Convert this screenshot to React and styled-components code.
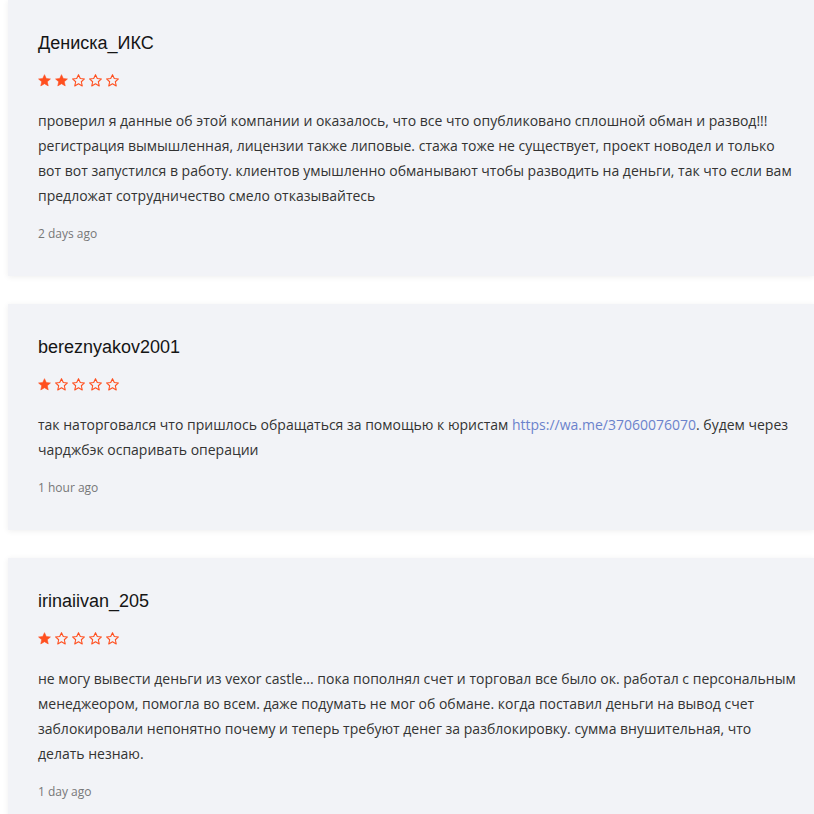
import React from "react";
import styled, { createGlobalStyle } from "styled-components";

const Global = createGlobalStyle`
  html, body { margin: 0; padding: 0; background: #fff; overflow-x: hidden; }
  body { font-family: "Open Sans", "Liberation Sans", sans-serif; }
`;

const List = styled.div`
  display: flex;
  flex-direction: column;
  gap: 28px;
  padding-left: 8px;
`;

const Card = styled.div`
  background: #f2f3f7;
  box-shadow: 0 1px 6px rgba(0, 0, 0, 0.07);
  padding: 30px 16px 33px 30px;
  display: flex;
  flex-direction: column;
`;

const Name = styled.div`
  font-family: "Liberation Sans", Arial, sans-serif;
  font-size: 18px;
  line-height: 26px;
  color: #151515;
`;

const Stars = styled.div`
  display: flex;
  gap: 4px;
  margin-top: 18px;
  height: 13px;
  align-items: center;
`;

const Body = styled.p`
  margin: 21px 0 0;
  font-size: 14px;
  line-height: 25px;
  color: #333;
`;

const Link = styled.a`
  color: #6b82cc;
  text-decoration: none;
`;

const Time = styled.div`
  margin-top: 17px;
  font-size: 12px;
  line-height: 18px;
  color: #777;
`;

const Star = ({ filled }) => (
  <svg width="13" height="13" viewBox="0 0 24 24">
    <path
      d="M12 1.2l3.3 7.1 7.7.8-5.8 5.2 1.7 7.7L12 18l-6.9 4 1.7-7.7L1 9.1l7.7-.8z"
      fill={filled ? "#ff4f1f" : "none"}
      stroke="#ff4f1f"
      strokeWidth={filled ? 1 : 2}
      strokeLinejoin="round"
    />
  </svg>
);

const Rating = ({ value }) => (
  <Stars>
    {[1, 2, 3, 4, 5].map((i) => (
      <Star key={i} filled={i <= value} />
    ))}
  </Stars>
);

const reviews = [
  {
    name: "Дениска_ИКС",
    rating: 2,
    text: (
      <>
        проверил я данные об этой компании и оказалось, что все что опубликовано сплошной обман и развод!!! регистрация вымышленная, лицензии также липовые. стажа тоже не существует, проект новодел и только вот вот запустился в работу. клиентов умышленно обманывают чтобы разводить на деньги, так что если вам предложат сотрудничество смело отказывайтесь
      </>
    ),
    time: "2 days ago",
  },
  {
    name: "bereznyakov2001",
    rating: 1,
    text: (
      <>
        так наторговался что пришлось обращаться за помощью к юристам{" "}
        <Link href="#">https://wa.me/37060076070</Link>. будем через чарджбэк оспаривать операции
      </>
    ),
    time: "1 hour ago",
  },
  {
    name: "irinaiivan_205",
    rating: 1,
    text: (
      <>
        не могу вывести деньги из vexor castle... пока пополнял счет и торговал все было ок. работал с персональным менеджеором, помогла во всем. даже подумать не мог об обмане. когда поставил деньги на вывод счет заблокировали непонятно почему и теперь требуют денег за разблокировку. сумма внушительная, что делать незнаю.
      </>
    ),
    time: "1 day ago",
  },
];

export default function App() {
  return (
    <>
      <Global />
      <List>
        {reviews.map((r) => (
          <Card key={r.name}>
            <Name>{r.name}</Name>
            <Rating value={r.rating} />
            <Body>{r.text}</Body>
            <Time>{r.time}</Time>
          </Card>
        ))}
      </List>
    </>
  );
}
